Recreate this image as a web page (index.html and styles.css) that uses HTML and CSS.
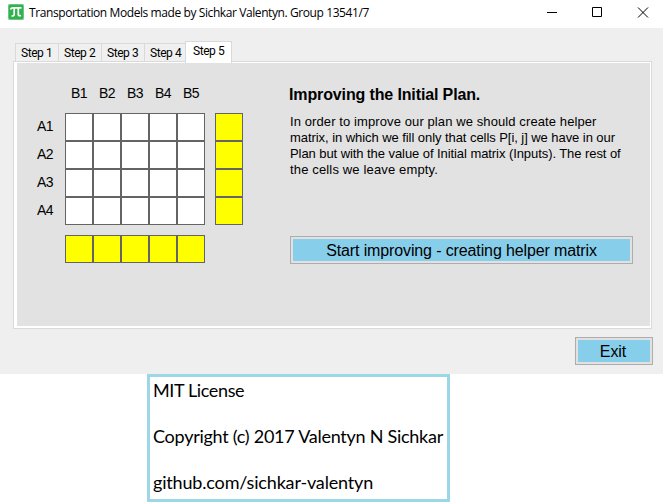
FILE: index.html
```html
<!DOCTYPE html>
<html lang="en">
<head>
<meta charset="utf-8">
<title>Transportation Models</title>
<link rel="stylesheet" href="styles.css">
</head>
<body>
<main class="window">
  <header class="titlebar">
    <svg class="logo" width="16" height="16" viewBox="0 0 16 16"><rect width="16" height="16" fill="#a9d5bd"/><rect x=".5" y=".5" width="15" height="15" rx="2" fill="#2fb34c"/><path d="M2.5 5.5Q3 3.8 5 3.8H13.5M6.2 4V10.5Q6.2 12 3.5 12M10.3 4V10.5Q10.3 12.2 13 11.5" fill="none" stroke="#fff" stroke-width="1.7"/></svg>
    <h1 class="title">Transportation Models made by Sichkar Valentyn. Group 13541/7</h1>
    <svg class="controls" width="104" height="12" viewBox="0 0 104 12" fill="none" stroke="#000"><path d="M0 5.5H10M45.5 .5H54.5V9.5H45.5ZM91 .5L101 10.5M101 .5L91 10.5"/></svg>
  </header>
  <section class="client">
    <nav class="tabs">
      <span class="tab">Step 1</span><span class="tab">Step 2</span><span class="tab">Step 3</span><span class="tab">Step 4</span><span class="tab active">Step 5</span>
    </nav>
    <div class="panel">
      <div class="page">
        <div class="matrix">
          <div class="cols"><span>B1</span><span>B2</span><span>B3</span><span>B4</span><span>B5</span></div>
          <div class="rows"><span>A1</span><span>A2</span><span>A3</span><span>A4</span></div>
          <div class="cells body"><i></i><i></i><i></i><i></i><i></i><i></i><i></i><i></i><i></i><i></i><i></i><i></i><i></i><i></i><i></i><i></i><i></i><i></i><i></i><i></i></div>
          <div class="cells supply"><i></i><i></i><i></i><i></i></div>
          <div class="cells demand"><i></i><i></i><i></i><i></i><i></i></div>
        </div>
        <div class="info">
          <h2>Improving the Initial Plan.</h2>
          <p><span class="l1">In order to improve our plan we should create helper</span><br><span class="l2">matrix, in which we fill only that cells P[i, j] we have in our</span><br><span class="l3">Plan but with the value of Initial matrix (Inputs). The rest of</span><br><span class="l4">the cells we leave empty.</span></p>
          <button class="btn start">Start improving - creating helper matrix</button>
        </div>
      </div>
    </div>
    <button class="btn exit">Exit</button>
  </section>
  <footer class="license">
    <p class="c1">MIT License</p>
    <p class="c2">Copyright (c) 2017 Valentyn N Sichkar</p>
    <p class="c3">github.com/sichkar-valentyn</p>
  </footer>
</main>
</body>
</html>
```

FILE: styles.css
```css
* { box-sizing: border-box; }
body { margin: 0; background: #fff; color: #000; font-family: "Liberation Sans", Arial, sans-serif; }
h1, h2, p { margin: 0; font-weight: normal; white-space: nowrap; }
.window { width: 663px; height: 502px; overflow: hidden; }
.titlebar { height: 28px; display: flex; align-items: flex-start; padding: 4px 0 0 8px; }
.logo { flex: none; }
.title { width: 517px; margin-left: 5px; font: 12px/18px "Open Sans", sans-serif; letter-spacing: -.41px; }
.controls { margin: 3px 0 0 1px; flex: none; }
.client { height: 346px; background: #efefef; padding: 13px 11px 0 13px; }
.tabs { height: 20px; display: flex; align-items: flex-end; padding-left: 2px; }
.tab { width: 43px; height: 18px; border: 1px solid #d9d9d9; border-width: 1px 0 0 1px; background: #f0f0f0; font: 12px/18px Roboto, sans-serif; padding-left: 5px; white-space: nowrap; letter-spacing: -.45px; }
.tab.active { position: relative; width: 47px; height: 22px; margin: 0 0 -2px -2px; border-right-width: 1px; background: #fff; padding-left: 7px; }
.panel { width: 639px; height: 268px; border: 1px solid #dadada; background: #fff; padding: 1px 1px 2px 3px; }
.page { height: 263px; width: 633px; background: #e2e2e2; display: flex; padding-left: 20px; }
.matrix { width: 252px; padding-top: 20px; display: grid; grid-template-columns: 28px 140px 28px; grid-template-rows: 30px 112px 28px; column-gap: 0; align-content: start; font-size: 14px; letter-spacing: -.5px; }
.cols { grid-column: 2; display: flex; }
.cols span { width: 28px; text-align: center; line-height: 20px; }
.rows { grid-column: 1; grid-row: 2; }
.rows span { display: block; height: 28px; line-height: 27px; }
.cells { display: grid; grid-template-columns: repeat(5, 28px); grid-auto-rows: 28px; }
.cells i { border: 1px solid #646464; background: #fff; }
.body { grid-column: 2; grid-row: 2; }
.supply { grid-column: 3; grid-row: 2; margin-left: 10px; grid-template-columns: 28px; }
.demand { grid-column: 2; grid-row: 3; margin-top: 10px; }
.supply i, .demand i { background: #ff0; }
.info { padding-top: 22px; }
h2 { font-size: 16px; line-height: 20px; font-weight: bold; letter-spacing: -.13px; }
.info p { font-size: 13px; line-height: 16px; margin: 9px 0 0 1px; height: 64px; }
.l1 { letter-spacing: .1px; }
.l2 { letter-spacing: -.06px; }
.l3 { letter-spacing: -.07px; }
.l4 { letter-spacing: .15px; }
.btn { display: block; font: 16px/20px "Liberation Sans", Arial, sans-serif; color: #000; background: #87ceeb; border: 1px solid #adadad; box-shadow: inset 0 0 0 2px #e1e1e1; padding: 2px 0 0; height: 28px; white-space: nowrap; }
.start { width: 343px; margin: 58px 0 0 1px; letter-spacing: -.125px; }
.exit { width: 78px; margin: 8px 0 0 562px; padding-right: 2px; letter-spacing: -.1px; }
.license { width: 303px; height: 128px; margin-left: 147px; border: 3px solid #9bd7e6; padding: 1px 0 0 3px; font: 18px/24px Lato, sans-serif; }
.license p { height: 46px; }
.c1 { letter-spacing: -.37px; }
.c2 { letter-spacing: -.26px; }
.c3 { letter-spacing: -.17px; }
```
